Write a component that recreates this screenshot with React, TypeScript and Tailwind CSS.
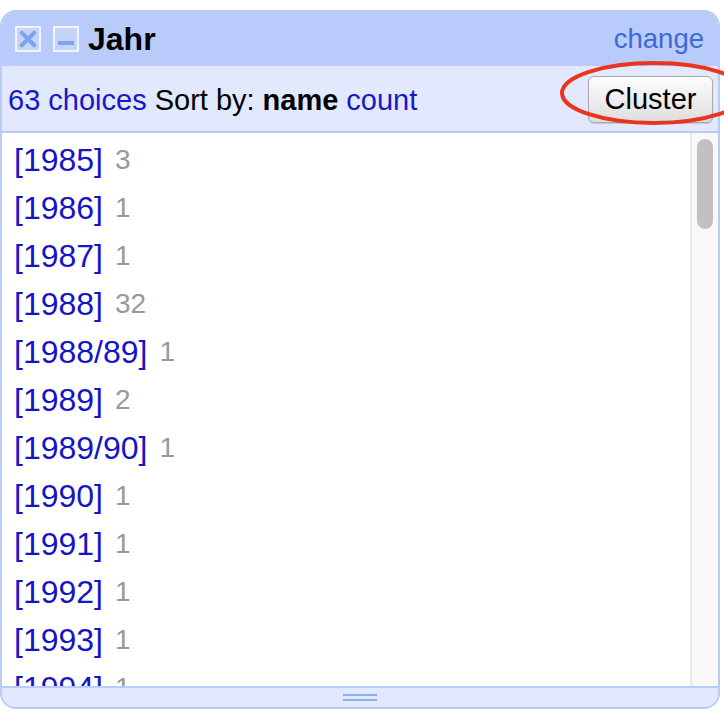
import React from 'react'

const items: [string, number][] = [
  ['[1985]', 3],
  ['[1986]', 1],
  ['[1987]', 1],
  ['[1988]', 32],
  ['[1988/89]', 1],
  ['[1989]', 2],
  ['[1989/90]', 1],
  ['[1990]', 1],
  ['[1991]', 1],
  ['[1992]', 1],
  ['[1993]', 1],
  ['[1994]', 1],
]

function CloseIcon() {
  return (
    <svg width="26" height="26" viewBox="0 0 26 26">
      <rect x="1" y="1" width="24" height="24" fill="#c4d4fb" stroke="#f2f5ff" strokeWidth="2" />
      <path d="M7 7 L19 19 M19 7 L7 19" stroke="#7ea2ee" strokeWidth="4" strokeLinecap="square" />
    </svg>
  )
}

function MinIcon() {
  return (
    <svg width="26" height="26" viewBox="0 0 26 26">
      <rect x="1" y="1" width="24" height="24" fill="#c4d4fb" stroke="#f2f5ff" strokeWidth="2" />
      <rect x="5" y="15" width="16" height="4" fill="#7ea2ee" />
    </svg>
  )
}

export default function App() {
  return (
    <div className="w-[724px] h-[714px] bg-white pt-[10px] overflow-hidden relative" style={{ fontFamily: '"Liberation Sans", Arial, sans-serif' }}>
      <div className="w-[720px] h-[699px] flex flex-col rounded-[16px] border-2 border-[#b9cbfa] overflow-hidden">
        {/* header */}
        <div className="h-[54px] bg-[#b9cbfa] flex items-center pl-[13px] pr-[14px] shrink-0">
          <CloseIcon />
          <div className="w-[12px]" />
          <MinIcon />
          <span className="ml-[9px] text-[32px] font-bold text-black leading-none">Jahr</span>
          <span className="ml-auto text-[27.5px] text-[#3b6ad6] leading-none">change</span>
        </div>
        {/* controls */}
        <div className="h-[67px] bg-[#e2e8fe] border-b-2 border-[#b9cbfa] flex items-center pl-[6px] pr-[5px] shrink-0">
          <span className="text-[29px] leading-none text-[#1818c8] mt-[3px]">63 choices</span>
          <span className="text-[29px] leading-none text-black ml-[8px] mt-[3px]">Sort by:</span>
          <span className="text-[29px] leading-none text-black font-bold ml-[8px] mt-[3px]">name</span>
          <span className="text-[29px] leading-none text-[#1818c8] ml-[8px] mt-[3px]">count</span>
          <button className="ml-auto mt-[1px] h-[47px] w-[125px] rounded-[6px] border border-[#a9a9a9] bg-gradient-to-b from-[#fdfdfd] to-[#dedede] text-[29px] text-black leading-none shadow-[0_1px_1px_rgba(0,0,0,0.15)]">
            Cluster
          </button>
        </div>
        {/* list */}
        <div className="flex-1 flex bg-white min-h-0">
          <div className="flex-1 overflow-hidden pt-[3px] pl-[12px]">
            {items.map(([name, count]) => (
              <div key={name} className="h-[48px] flex items-center whitespace-nowrap">
                <span className="text-[32px] leading-none text-[#1414c8]">{name}</span>
                <span className="text-[28px] leading-none text-[#999999] ml-[12px]">{count}</span>
              </div>
            ))}
          </div>
          <div className="w-[28px] bg-[#f8f8f8] border-l-2 border-[#e8e8e8] flex justify-center pt-[6px]">
            <div className="w-[16px] h-[90px] rounded-full bg-[#c1c1c1]" />
          </div>
        </div>
        {/* footer */}
        <div className="h-[21px] bg-[#e2e8fe] border-t-2 border-[#b9cbfa] flex flex-col items-center justify-center gap-[3px] shrink-0">
          <div className="w-[34px] h-[2px] bg-[#8eaaf0]" />
          <div className="w-[34px] h-[2px] bg-[#8eaaf0]" />
        </div>
      </div>
      {/* red annotation ellipse */}
      <svg className="absolute left-0 top-0 pointer-events-none" width="724" height="714">
        <ellipse cx="654" cy="93" rx="92" ry="30" fill="none" stroke="#e8351d" strokeWidth="4" />
      </svg>
    </div>
  )
}
